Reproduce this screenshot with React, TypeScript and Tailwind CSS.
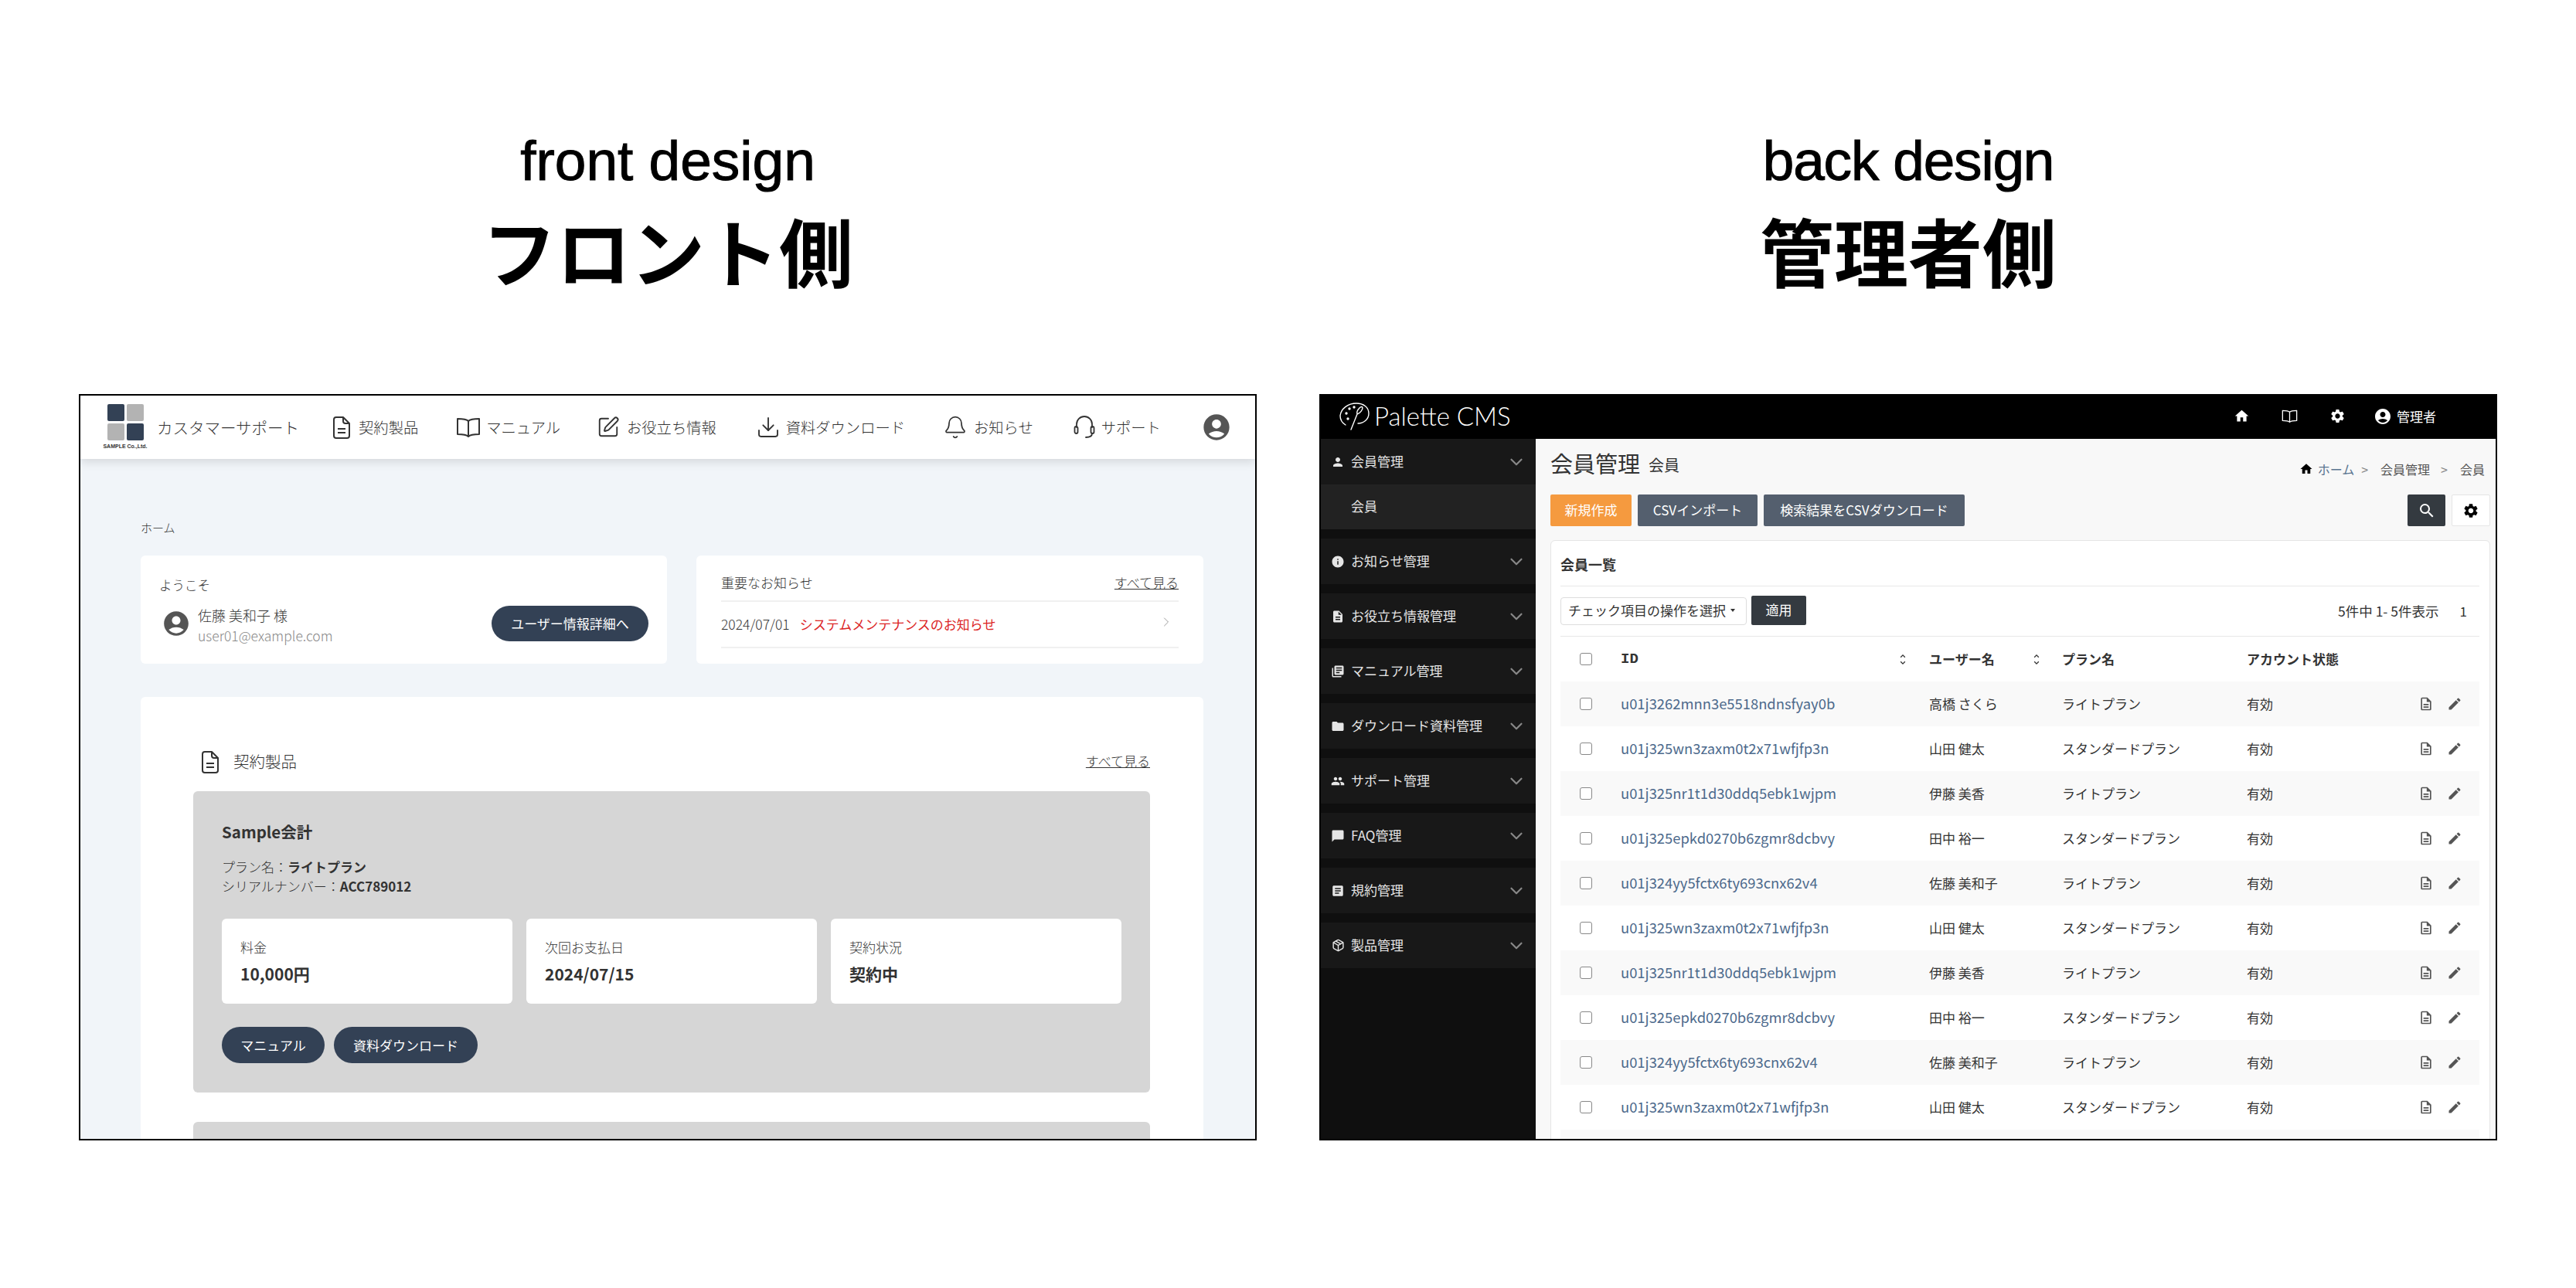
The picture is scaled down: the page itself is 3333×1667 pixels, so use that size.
import { Bell, ChevronDown, ChevronRight, Download, Package, SquarePen } from 'lucide-react';
import {
  MdAccountCircle,
  MdArticle,
  MdChatBubble,
  MdDescription,
  MdEdit,
  MdFolder,
  MdHome,
  MdInfo,
  MdLibraryBooks,
  MdOutlineDescription,
  MdPeople,
  MdPerson,
  MdSearch,
  MdSettings,
} from 'react-icons/md';

const jp = { fontFamily: '"Noto Sans CJK JP", sans-serif' };

const DocIcon = ({ className }: { className?: string }) => (
  <svg viewBox="0 0 22 29" fill="none" stroke="currentColor" strokeWidth="2" className={className}>
    <path d="M4 1h9l8 8v16a3 3 0 0 1-3 3H4a3 3 0 0 1-3-3V4a3 3 0 0 1 3-3z" strokeLinejoin="round" />
    <path d="M13 1v5a3 3 0 0 0 3 3h5M6 16h10M6 21h10" />
  </svg>
);

const BookIcon = ({ className }: { className?: string }) => (
  <svg viewBox="0 0 32 26" fill="none" stroke="currentColor" strokeWidth="2" strokeLinejoin="round" className={className}>
    <path d="M16 5c-2-2-5-3-14-3v20c9 0 12 1 14 3 2-2 5-3 14-3V2c-9 0-12 1-14 3zM16 5v20" />
  </svg>
);

const HeadsetIcon = () => (
  <svg viewBox="0 0 28 30" fill="none" stroke="currentColor" strokeWidth="1.8" strokeLinecap="round" className="h-[30px] w-[28px]">
    <path d="M4 15v-4a10 10 0 0 1 20 0v4" />
    <rect x="1.5" y="14" width="4" height="9" rx="2" />
    <rect x="22.5" y="14" width="4" height="9" rx="2" />
    <path d="M24 23c0 3-3 5-8 5" />
  </svg>
);

const PaletteLogo = () => (
  <svg viewBox="0 0 40 36" fill="none" stroke="#fff" strokeWidth="1.4" strokeLinecap="round" className="h-[36px] w-[40px]">
    <path d="M8 29C3 26 1 22 1 17 2 8 11 1 22 1c9 0 16 5 16 13 0 8-7 13-14 13" />
    <path d="M26 7c2-2 4-2 4 0s-3 7-7 8c-1-3 1-6 3-8zM23 15l-8 20" />
    <circle cx="9" cy="14" r="1" fill="#fff" />
    <circle cx="13" cy="8" r="1" fill="#fff" />
    <circle cx="19" cy="6" r="1" fill="#fff" />
    <circle cx="11" cy="21" r="1" fill="#fff" />
  </svg>
);

const SortIcon = () => (
  <svg viewBox="0 0 8 16" fill="none" stroke="#333" strokeWidth="1.4" className="h-[15px] w-[8px]">
    <path d="M1 5l3-3 3 3M1 11l3 3 3-3" />
  </svg>
);

const navItems = [
  { label: '契約製品', icon: <DocIcon className="h-[29px] w-[22px]" />, cls: 'ml-[44px] gap-[11px]' },
  { label: 'マニュアル', icon: <BookIcon className="h-[26px] w-[32px]" />, cls: 'ml-[49px] gap-[7px]' },
  { label: 'お役立ち情報', icon: <SquarePen size={30} strokeWidth={1.5} />, cls: 'ml-[47px] gap-[9px]' },
  { label: '資料ダウンロード', icon: <Download size={32} strokeWidth={1.4} />, cls: 'ml-[51px] gap-[7px]' },
  { label: 'お知らせ', icon: <Bell size={32} strokeWidth={1.3} />, cls: 'ml-[49px] gap-[8px]' },
  { label: 'サポート', icon: <HeadsetIcon />, cls: 'ml-[52px] gap-[8px]' },
];

const stats = [
  { label: '料金', value: '10,000円' },
  { label: '次回お支払日', value: '2024/07/15' },
  { label: '契約状況', value: '契約中' },
];

const sideItems = [
  { label: 'お知らせ管理', icon: <MdInfo size={18} /> },
  { label: 'お役立ち情報管理', icon: <MdDescription size={18} /> },
  { label: 'マニュアル管理', icon: <MdLibraryBooks size={18} /> },
  { label: 'ダウンロード資料管理', icon: <MdFolder size={18} /> },
  { label: 'サポート管理', icon: <MdPeople size={18} /> },
  { label: 'FAQ管理', icon: <MdChatBubble size={18} /> },
  { label: '規約管理', icon: <MdArticle size={18} /> },
  { label: '製品管理', icon: <Package size={17} strokeWidth={2} /> },
];

const rows = [
  ['u01j3262mnn3e5518ndnsfyay0b', '高橋 さくら', 'ライトプラン'],
  ['u01j325wn3zaxm0t2x71wfjfp3n', '山田 健太', 'スタンダードプラン'],
  ['u01j325nr1t1d30ddq5ebk1wjpm', '伊藤 美香', 'ライトプラン'],
  ['u01j325epkd0270b6zgmr8dcbvy', '田中 裕一', 'スタンダードプラン'],
  ['u01j324yy5fctx6ty693cnx62v4', '佐藤 美和子', 'ライトプラン'],
  ['u01j325wn3zaxm0t2x71wfjfp3n', '山田 健太', 'スタンダードプラン'],
  ['u01j325nr1t1d30ddq5ebk1wjpm', '伊藤 美香', 'ライトプラン'],
  ['u01j325epkd0270b6zgmr8dcbvy', '田中 裕一', 'スタンダードプラン'],
  ['u01j324yy5fctx6ty693cnx62v4', '佐藤 美和子', 'ライトプラン'],
  ['u01j325wn3zaxm0t2x71wfjfp3n', '山田 健太', 'スタンダードプラン'],
];

const Heading = ({ en, ja, tight }: { en: string; ja: string; tight?: boolean }) => (
  <div className="h-[510px] pt-[166px] text-center text-black" style={{ fontFamily: '"Liberation Sans", "Noto Sans CJK JP", sans-serif' }}>
    <div className={tight ? 'text-[73px] leading-[84px] tracking-[-1.2px] [-webkit-text-stroke:1px_black]' : 'text-[73px] leading-[84px] [-webkit-text-stroke:1px_black]'}>{en}</div>
    <div className="mt-[11px] text-[96px] font-bold leading-[140px]">{ja}</div>
  </div>
);

const Pill = ({ children, className }: { children: string; className: string }) => (
  <button className={`flex h-[47px] items-center justify-center rounded-full bg-[#334155] text-[17px] font-normal text-white ${className}`}>{children}</button>
);

const FrontSide = () => (
  <div className="flex h-[966px] flex-col overflow-hidden border-2 border-black bg-[#f1f5f9] font-light text-[#333]" style={jp}>
    <header className="flex h-[82px] shrink-0 items-center bg-white pl-[29px] shadow-[0_4px_12px_rgba(0,0,0,0.12)]">
      <div className="flex w-[58px] flex-col items-center">
        <div className="grid grid-cols-2 gap-[3px]">
          <div className="h-[22px] w-[22px] rounded-[2px] bg-[#334155]" />
          <div className="h-[22px] w-[22px] rounded-[2px] bg-[#b3b3b3]" />
          <div className="h-[22px] w-[22px] rounded-[2px] bg-[#b3b3b3]" />
          <div className="h-[22px] w-[22px] rounded-[2px] bg-[#334155]" />
        </div>
        <div className="mt-[3px] whitespace-nowrap text-[7px] font-bold leading-[10px]" style={{ fontFamily: '"Liberation Sans", sans-serif' }}>
          SAMPLE Co.,Ltd.
        </div>
      </div>
      <span className="ml-[12px] text-[20.5px]">カスタマーサポート</span>
      {navItems.map((item) => (
        <div key={item.label} className={`flex items-center ${item.cls}`}>
          {item.icon}
          <span className="text-[19.3px]">{item.label}</span>
        </div>
      ))}
      <MdAccountCircle size={40} className="ml-[52px] text-[#555]" />
    </header>

    <main className="pl-[78px] pt-[77px]">
      <div className="text-[15px] leading-[24px]">ホーム</div>
      <div className="mt-[24px] flex gap-[38px]">
        <section className="h-[140px] w-[681px] rounded-[6px] bg-white pl-[24px] pr-[24px] pt-[26px]">
          <div className="text-[16.5px] leading-[24px]">ようこそ</div>
          <div className="mt-[14px] flex items-start">
            <MdAccountCircle size={38} className="ml-[3px] mt-[5px] text-[#555]" />
            <div className="ml-[9px] flex-1">
              <div className="text-[18px] leading-[26px]">佐藤 美和子 様</div>
              <div className="mt-[1px] text-[17.5px] leading-[26px] text-[#888]">user01@example.com</div>
            </div>
            <button className="mt-[1px] h-[46px] w-[203px] rounded-full bg-[#334155] text-[17px] font-normal text-white">ユーザー情報詳細へ</button>
          </div>
        </section>
        <section className="h-[140px] w-[656px] rounded-[6px] bg-white pl-[32px] pr-[32px] pt-[23px]">
          <div className="flex items-center justify-between border-b-2 border-[#f0f0f0] pb-[11px] text-[17px] leading-[24px]">
            <span>重要なお知らせ</span>
            <span className="underline">すべて見る</span>
          </div>
          <div className="flex h-[60px] items-center border-b-2 border-[#f0f0f0] text-[17px]">
            <span className="text-[17.5px]">2024/07/01</span>
            <span className="ml-[13px] flex-1 font-normal text-[#dc2626]">システムメンテナンスのお知らせ</span>
            <ChevronRight size={20} strokeWidth={1} className="mb-[6px] mr-[6px] text-[#888]" />
          </div>
        </section>
      </div>

      <section className="mt-[43px] w-[1375px] rounded-[6px] bg-white pl-[68px] pr-[69px] pt-[68px]">
        <div className="flex h-[30px] items-center justify-between">
          <div className="flex items-center gap-[19px] pl-[11px] text-[20.5px]">
            <DocIcon className="mt-[2px] h-[29px] w-[22px]" />
            <span>契約製品</span>
          </div>
          <span className="text-[17px] underline">すべて見る</span>
        </div>
        <div className="mt-[24px] h-[390px] rounded-[6px] bg-[#d6d6d6] px-[37px] pt-[37px]">
          <div className="text-[20.5px] font-bold leading-[30px]">Sample会計</div>
          <div className="mt-[18px] text-[17px] leading-[25px]">
            <div>
              プラン名：<span className="font-bold">ライトプラン</span>
            </div>
            <div>
              シリアルナンバー：<span className="font-bold">ACC789012</span>
            </div>
          </div>
          <div className="mt-[30px] grid grid-cols-3 gap-[18px]">
            {stats.map((s) => (
              <div key={s.label} className="h-[110px] rounded-[6px] bg-white pl-[24px] pt-[25px]">
                <div className="text-[17px] leading-[24px]">{s.label}</div>
                <div className="mt-[7px] text-[21px] font-bold leading-[30px]">{s.value}</div>
              </div>
            ))}
          </div>
          <div className="mt-[30px] flex gap-[12px]">
            <Pill className="w-[133px]">マニュアル</Pill>
            <Pill className="w-[186px]">資料ダウンロード</Pill>
          </div>
        </div>
        <div className="mt-[38px] h-[200px] rounded-[6px] bg-[#d6d6d6]" />
      </section>
    </main>
  </div>
);

const SideRow = ({ label, icon }: { label: string; icon: React.ReactNode }) => (
  <div className="flex h-[59px] items-center bg-[#181818] pl-[13px] pr-[12px] text-[#e5e5e5]">
    <span className="flex w-[18px] justify-center">{icon}</span>
    <span className="mb-[2px] ml-[8px] flex-1 text-[17px]">{label}</span>
    <ChevronDown size={26} strokeWidth={2} className="text-[#888]" />
  </div>
);

const BackSide = () => (
  <div className="flex h-[966px] flex-col overflow-hidden border-2 border-black bg-[#f8f8f8] text-[#333]" style={jp}>
    <header className="flex h-[56px] shrink-0 items-center bg-black pb-[3px] pl-[24px] text-white">
      <PaletteLogo />
      <span className="ml-[5px] w-[181px] text-[33px] font-light leading-none" style={{ fontFamily: 'Lato, sans-serif' }}>
        Palette CMS
      </span>
      <MdHome size={21} className="ml-[931px]" />
      <BookIcon className="ml-[41px] h-[17px] w-[21px]" />
      <MdSettings size={21} className="ml-[41px]" />
      <MdAccountCircle size={24} className="ml-[36px]" />
      <span className="ml-[6px] text-[17px]">管理者</span>
    </header>

    <div className="flex min-h-0 flex-1">
      <aside className="w-[278px] shrink-0 bg-[#0f0f0f]">
        <SideRow label="会員管理" icon={<MdPerson size={20} />} />
        <div className="flex h-[58px] items-center bg-[#222] pb-[2px] pl-[39px] text-[17px] text-[#e5e5e5]">会員</div>
        <div className="mt-[12px] flex flex-col gap-[12px]">
          {sideItems.map((s) => (
            <SideRow key={s.label} label={s.label} icon={s.icon} />
          ))}
        </div>
      </aside>

      <main className="flex-1 pl-[19px] pr-[7px] pt-[11px]">
        <div className="flex h-[40px] items-center justify-between">
          <div className="flex items-center">
            <span className="text-[29px] leading-[40px]">会員管理</span>
            <span className="ml-[11px] mt-[6px] text-[20px]">会員</span>
          </div>
          <div className="mt-[15px] flex items-center pr-[7px] text-[16px] text-[#555]">
            <MdHome size={18} className="text-black" />
            <span className="ml-[6px] text-[#5a7590]">ホーム</span>
            <span className="ml-[9px] text-[#888]">&gt;</span>
            <span className="ml-[16px]">会員管理</span>
            <span className="ml-[14px] text-[#888]">&gt;</span>
            <span className="ml-[16px]">会員</span>
          </div>
        </div>

        <div className="mt-[21px] flex h-[41px] gap-[8px] text-[17px] text-white">
          <button className="w-[105px] rounded-[2px] bg-[#f59a3f] pb-[2px]">新規作成</button>
          <button className="w-[155px] rounded-[2px] bg-[#545f6e] pb-[2px]">CSVインポート</button>
          <button className="w-[260px] rounded-[2px] bg-[#545f6e] pb-[2px]">検索結果をCSVダウンロード</button>
          <button className="ml-auto flex w-[49px] items-center justify-center rounded-[2px] bg-[#343a40]">
            <MdSearch size={24} />
          </button>
          <button className="flex w-[50px] items-center justify-center rounded-[2px] border border-[#e5e5e5] bg-white text-black">
            <MdSettings size={22} />
          </button>
        </div>

        <section className="mt-[18px] rounded-[6px] border border-[#e5e5e5] bg-white pl-[12px] pr-[13px] pt-[17px]">
          <div className="border-b border-[#e8e8e8] pb-[15px] text-[18px] font-bold leading-[26px]">会員一覧</div>
          <div className="flex h-[65px] items-center border-b border-[#e8e8e8] text-[17px]">
            <div className="flex h-[36px] w-[241px] items-center rounded-[4px] border border-[#ddd] pb-[2px] pl-[9px]">
              チェック項目の操作を選択
              <span className="ml-[6px] h-0 w-0 border-x-[3px] border-t-[4px] border-x-transparent border-t-[#333]" />
            </div>
            <button className="mb-[2px] ml-[6px] h-[38px] w-[71px] rounded-[2px] bg-[#343a40] pb-[2px] text-white">適用</button>
            <span className="ml-auto text-[17.5px]">5件中 1- 5件表示</span>
            <span className="ml-[27px] mr-[16px]">1</span>
          </div>

          <div className="flex h-[58px] items-center text-[17px] font-bold">
            <input type="checkbox" className="ml-[25px] h-[16px] w-[16px] appearance-none rounded-[3px] border border-[#888] bg-white" />
            <div className="ml-[37px] flex w-[399px] items-center pr-[30px]">
              <span className="flex-1 text-[19px]" style={{ fontFamily: '"Liberation Mono", monospace' }}>ID</span>
              <SortIcon />
            </div>
            <div className="flex w-[172px] items-center pr-[29px]">
              <span className="flex-1">ユーザー名</span>
              <SortIcon />
            </div>
            <div className="w-[239px]">プラン名</div>
            <div>アカウント状態</div>
          </div>

          {rows.map((r, i) => (
            <div key={i} className={i % 2 === 0 ? 'flex h-[58px] items-center bg-[#f9f9f9] text-[17px]' : 'flex h-[58px] items-center bg-white text-[17px]'}>
              <input type="checkbox" className="ml-[25px] h-[16px] w-[16px] appearance-none rounded-[3px] border border-[#888] bg-white" />
              <div className="ml-[37px] w-[399px] text-[18.4px] text-[#4d6a8c]">{r[0]}</div>
              <div className="w-[172px]">{r[1]}</div>
              <div className="w-[239px]">{r[2]}</div>
              <div className="w-[222px]">有効</div>
              <MdOutlineDescription size={20} className="text-[#555]" />
              <MdEdit size={20} className="ml-[17px] text-[#555]" />
            </div>
          ))}
          <div className="h-[58px] bg-[#f9f9f9]" />
        </section>
      </main>
    </div>
  </div>
);

export default function App() {
  return (
    <div className="grid h-[1667px] w-[3333px] grid-cols-[1524px_1524px] gap-x-[81px] overflow-hidden bg-white pl-[102px]">
      <div>
        <Heading en="front design" ja="フロント側" />
        <FrontSide />
      </div>
      <div>
        <Heading en="back design" ja="管理者側" tight />
        <BackSide />
      </div>
    </div>
  );
}
